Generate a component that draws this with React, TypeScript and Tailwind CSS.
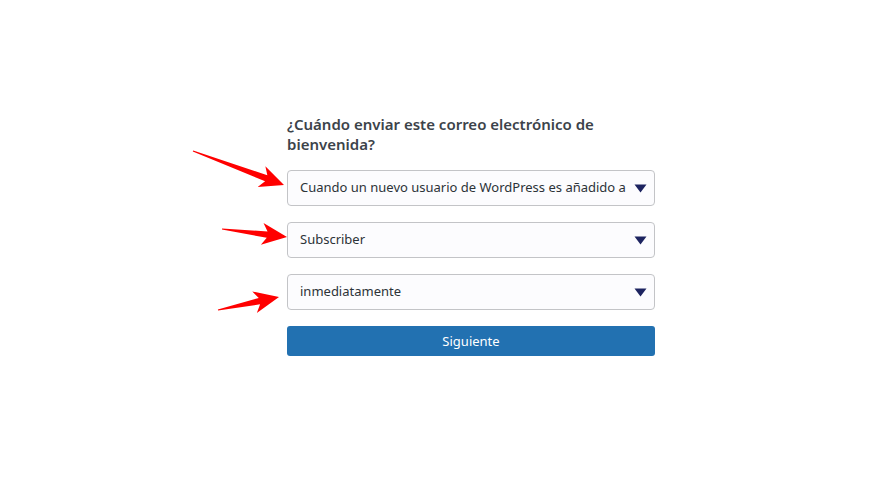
import React from "react"

type Pt = [number, number]

// red annotation arrow, tail -> tip
function arrowPoints(tail: Pt, tip: Pt, hl = 19, hw = 11, sw = 3.2, back = 5) {
  const dx = tip[0] - tail[0]
  const dy = tip[1] - tail[1]
  const L = Math.hypot(dx, dy)
  const ux = dx / L, uy = dy / L
  const nx = -uy, ny = ux
  const at = (u: number, v: number) => `${tail[0] + ux * u + nx * v},${tail[1] + uy * u + ny * v}`
  return [
    at(0, -0.6),
    at(L - hl, -sw),
    at(L - hl - back, -hw),
    at(L, 0),
    at(L - hl - back, hw),
    at(L - hl, sw),
    at(0, 0.6),
  ].join(" ")
}

function Caret() {
  return (
    <svg width="13" height="9" viewBox="0 0 13 9" className="shrink-0">
      <path d="M0.5 0.5 H12.5 L6.5 8.5 Z" fill="#1d2460" />
    </svg>
  )
}

function FakeSelect({ label }: { label: string }) {
  return (
    <div className="flex h-[36px] w-[368px] items-center gap-2 rounded-[4px] border border-[#c3c4c7] bg-[#fcfcfe] pl-[12px] pr-[7px]">
      <span className="flex-1 overflow-hidden whitespace-nowrap text-[13px] text-[#2c3338]">{label}</span>
      <Caret />
    </div>
  )
}

export default function App() {
  return (
    <main
      className="relative h-[486px] w-[885px] overflow-hidden bg-white"
      style={{ fontFamily: '"Noto Sans", "Open Sans", sans-serif' }}
    >
      <section className="ml-[287px] flex w-[368px] flex-col pt-[114px]">
        <h2 className="text-[15px] font-semibold leading-[20px] text-[#3c434a]">
          ¿Cuándo enviar este correo electrónico de bienvenida?
        </h2>
        <div className="mt-[16px] flex flex-col gap-[16px]">
          <FakeSelect label="Cuando un nuevo usuario de WordPress es añadido a" />
          <FakeSelect label="Subscriber" />
          <FakeSelect label="inmediatamente" />
        </div>
        <button className="mt-[16px] h-[30px] w-[368px] rounded-[3px] bg-[#2271b1] pt-px text-[13px] text-white">
          Siguiente
        </button>
      </section>

      {/* annotation arrows */}
      <svg className="pointer-events-none absolute left-0 top-0" width="885" height="486">
        <polygon points={arrowPoints([193, 151], [284, 185])} fill="#ff0000" />
        <polygon points={arrowPoints([222, 229], [287, 237], 20, 11)} fill="#ff0000" />
        <polygon points={arrowPoints([218, 310], [279, 297], 20, 11)} fill="#ff0000" />
      </svg>
    </main>
  )
}
